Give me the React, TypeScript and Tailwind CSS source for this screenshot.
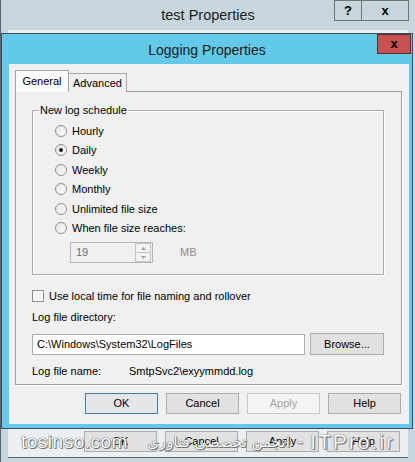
import React from "react";

const font = { fontFamily: '"Liberation Sans", Arial, sans-serif' };

function Radio({ label, checked }: { label: string; checked?: boolean }) {
  return (
    <div className="flex h-[19.5px] items-center gap-[5px]">
      <div className="flex h-[12px] w-[12px] items-center justify-center rounded-full border border-[#8e8f8f] bg-gradient-to-br from-[#e6e6e6] to-[#fbfbfb]">
        {checked && <div className="h-[4px] w-[4px] rounded-full bg-[#1a1a1a]" />}
      </div>
      <span className="text-[11px] leading-[14px] text-black">{label}</span>
    </div>
  );
}

function Btn({ label, variant }: { label: string; variant?: "default" | "disabled" | "normal" }) {
  const cls =
    variant === "default"
      ? "border-[#3c7fb1] bg-[#e6e6e6] text-black"
      : variant === "disabled"
      ? "border-[#c8c8c8] bg-[#f4f4f4] text-[#a3a3a3]"
      : "border-[#acacac] bg-[#e1e1e1] text-black";
  return (
    <div className={`flex h-[21px] w-[73px] items-center justify-center border text-[11px] ${cls}`}>{label}</div>
  );
}

export default function App() {
  return (
    <div style={font} className="relative flex h-[462px] w-[415px] flex-col overflow-hidden border-l border-[#55636b] bg-[#c7d5dd]">
      {/* outer title bar */}
      <div className="relative flex h-[30px] shrink-0 items-start justify-center">
        <span className="mt-[6px] text-[14.5px] leading-[18px] text-[#1b1b1b]">test Properties</span>
        <div className="absolute right-[6px] top-0 flex">
          <div className="flex h-[21px] w-[28px] items-center justify-center border border-[#6c767c] text-[13px] font-bold text-black">?</div>
          <div className="-ml-px flex h-[21px] w-[48px] items-center justify-center border border-[#6c767c] text-[13px] font-bold text-black">x</div>
        </div>
      </div>
      {/* outer content (mostly hidden) */}
      <div className="mx-[7px] mb-[4px] flex flex-1 flex-col justify-end border-t-2 border-b border-t-[#e9eef1] border-b-[#56646c] bg-[#eceff1] pb-[5px]">
        <div className="flex justify-end gap-[8px] pr-[8px]">
          <Btn label="OK" />
          <Btn label="Cancel" />
          <Btn label="Apply" />
          <Btn label="Help" />
        </div>
      </div>

      {/* watermark */}
      <div className="absolute left-[20px] right-[20px] top-[430px] flex items-center justify-between whitespace-nowrap text-[19px] leading-[24px] text-white [text-shadow:0_0_1px_#4b4b4b,0_0_1px_#4b4b4b,1px_1px_0_#7a7a7a]">
        <span className="tracking-[0.5px]">tosinso.com</span>
        <div className="flex items-center gap-[7px]">
          <span style={{ fontFamily: '"DejaVu Sans", sans-serif' }} className="whitespace-nowrap text-[15px]">انجمن تخصصی فناوری</span>
          <span>-</span>
          <span className="text-[21px] tracking-[2px]">ITPro.ir</span>
        </div>
      </div>

      {/* inner dialog */}
      <div className="absolute left-0 top-[33px] flex h-[396px] w-[412px] flex-col border border-[#3d4f5a] bg-[#62c9e8]">
        <div className="relative flex h-[30px] shrink-0 items-center justify-center">
          <span className="mt-[1px] text-[14px] leading-[18px] text-[#1b1b1b]">Logging Properties</span>
          <div className="absolute right-[1px] top-0 flex h-[20px] w-[34px] items-center justify-center border border-[#5a2a2a] bg-[#c75050] text-[13px] font-bold text-black">
            x
          </div>
        </div>
        <div className="mb-[4px] ml-[7px] mr-[3px] flex flex-1 flex-col bg-[#f0f0f0] px-[6px] pt-[6px]">
          {/* tabs */}
          <div className="relative z-10 flex h-[22px] items-end">
            <div className="flex h-[22px] w-[54px] items-center justify-center border border-b-0 border-[#a5a5a5] bg-[#fbfbfb] pb-[1px] text-[11px] text-black">
              General
            </div>
            <div className="flex h-[19px] w-[58px] items-center justify-center border border-b-0 border-l-0 border-[#a5a5a5] bg-[#f0f0f0] text-[11px] text-black">
              Advanced
            </div>
          </div>
          {/* panel */}
          <div className="-mt-px flex h-[294px] w-[387px] flex-col border border-[#a0a0a0] bg-[#f0f0f0] pl-[16px] pr-[17px] pt-[18px] shadow-[1px_1px_0_#ffffff]">
            {/* group box */}
            <div className="flex h-[165px] flex-col border border-[#a9a9a9] pb-[11px] pl-[22px] shadow-[inset_1px_1px_0_#ffffff,1px_1px_0_#ffffff]">
              <div className="-ml-[16px] -mt-[8px] w-fit bg-[#f0f0f0] px-[1px] text-[11px] leading-[14px] text-black">
                New log schedule
              </div>
              <div className="mt-[4px] flex flex-col">
                <Radio label="Hourly" />
                <Radio label="Daily" checked />
                <Radio label="Weekly" />
                <Radio label="Monthly" />
                <Radio label="Unlimited file size" />
                <Radio label="When file size reaches:" />
              </div>
              <div className="ml-[15px] mt-[4px] flex items-center">
                <div className="flex h-[21px] w-[83px] items-center border border-[#b4b4b4] bg-[#f0f0f0]">
                  <span className="flex-1 pl-[5px] text-[11px] text-[#6d6d6d]">19</span>
                  <div className="mr-[1px] flex h-[19px] w-[16px] flex-col">
                    <div className="flex flex-1 items-center justify-center border border-[#c3c3c3] bg-[#f2f2f2]">
                      <svg width="5" height="3" viewBox="0 0 5 3"><path d="M0 3 L2.5 0 L5 3Z" fill="#a0a0a0" /></svg>
                    </div>
                    <div className="flex flex-1 items-center justify-center border border-t-0 border-[#c3c3c3] bg-[#f2f2f2]">
                      <svg width="5" height="3" viewBox="0 0 5 3"><path d="M0 0 L2.5 3 L5 0Z" fill="#a0a0a0" /></svg>
                    </div>
                  </div>
                </div>
                <span className="ml-[27px] text-[11px] text-[#8d8d8d]">MB</span>
              </div>
            </div>

            {/* checkbox */}
            <div className="mt-[14px] flex items-center gap-[5px]">
              <div className="h-[12px] w-[12px] border border-[#8e8f8f] bg-[#f7f7f7]" />
              <span className="text-[11px] leading-[14px] text-black">Use local time for file naming and rollover</span>
            </div>

            <div className="mt-[7px] text-[11px] leading-[14px] text-black">Log file directory:</div>

            <div className="mt-[9px] flex items-center gap-[5px]">
              <div className="flex h-[21px] w-[273px] items-center border border-[#abadb3] bg-white pl-[4px] text-[11px] text-black">
                C:\Windows\System32\LogFiles
              </div>
              <div className="flex h-[22px] w-[74px] items-center justify-center border border-[#acacac] bg-[#e1e1e1] text-[11px] text-black">
                Browse...
              </div>
            </div>

            <div className="mt-[9px] flex text-[11px] leading-[14px] text-black">
              <span className="w-[97px]">Log file name:</span>
              <span>SmtpSvc2\exyymmdd.log</span>
            </div>
          </div>
          {/* buttons */}
          <div className="mt-[8px] flex justify-end gap-[8px] pr-[2px]">
            <Btn label="OK" variant="default" />
            <Btn label="Cancel" />
            <Btn label="Apply" variant="disabled" />
            <Btn label="Help" />
          </div>
        </div>
      </div>
    </div>
  );
}
